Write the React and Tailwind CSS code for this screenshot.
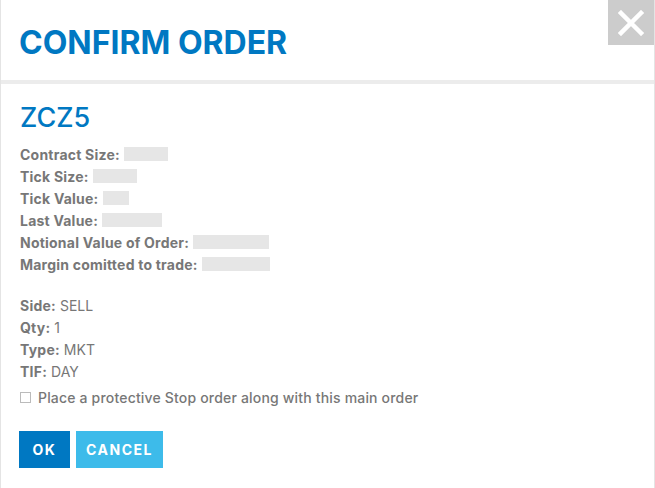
import React from 'react';

const specs = [
  { label: 'Contract Size:', w: 'w-[44px]' },
  { label: 'Tick Size:', w: 'w-[44px]' },
  { label: 'Tick Value:', w: 'w-[26px]' },
  { label: 'Last Value:', w: 'w-[60px]' },
  { label: 'Notional Value of Order:', w: 'w-[76px]' },
  { label: 'Margin comitted to trade:', w: 'w-[68px]' },
];

const order = [
  ['Side:', 'SELL'],
  ['Qty:', '1'],
  ['Type:', 'MKT'],
  ['TIF:', 'DAY'],
];

export default function App() {
  return (
    <div className="w-[655px] h-[488px] bg-white border-x border-[#e4e4e4] font-['Inter',sans-serif] text-[#777777] relative overflow-hidden">
      {/* header */}
      <div className="h-[80px] flex items-center pl-[18px]">
        <h1 className="text-[32px] font-bold text-[#0078c2] leading-none pt-[6px]">CONFIRM ORDER</h1>
      </div>
      <button className="absolute top-0 right-0 w-[46px] h-[45px] bg-[#cccccc] flex items-center justify-center">
        <svg width="26" height="26" viewBox="0 0 26 26">
          <path d="M3 3 L23 23 M23 3 L3 23" stroke="#ffffff" strokeWidth="4.5" strokeLinecap="square" />
        </svg>
      </button>
      <div className="h-[4px] bg-[#ececec]" />

      <div className="px-[19px] pt-[20px]">
        <h2 className="text-[27px] font-medium text-[#0078c2] leading-none">ZCZ5</h2>
        <div className="mt-[12px] flex flex-col">
          {specs.map((s) => (
            <div key={s.label} className="h-[22px] flex items-center gap-[4px] text-[14px]">
              <span className="font-bold tracking-[0.22px]">{s.label}</span>
              <span className={`${s.w} h-[14px] bg-[#e6e6e6]`} />
            </div>
          ))}
        </div>

        <div className="mt-[19px] flex flex-col">
          {order.map(([k, v]) => (
            <div key={k} className="h-[22px] flex items-center gap-[4px] text-[14px]">
              <span className="font-bold tracking-[0.22px]">{k}</span>
              <span>{v}</span>
            </div>
          ))}
        </div>

        <label className="mt-[4px] h-[22px] flex items-center gap-[7px] text-[14px] font-medium tracking-[0.18px]">
          <span className="w-[11px] h-[11px] border border-[#bbbbbb] bg-white" />
          <span>Place a protective Stop order along with this main order</span>
        </label>

        <div className="mt-[23px] flex gap-[6px] -ml-[1px]">
          <button className="w-[51px] h-[37px] bg-[#0078c2] text-white text-[14px] font-bold tracking-[1.5px]">OK</button>
          <button className="w-[87px] h-[37px] bg-[#3dbbea] text-white text-[14px] font-bold tracking-[1.5px]">CANCEL</button>
        </div>
      </div>
    </div>
  );
}
